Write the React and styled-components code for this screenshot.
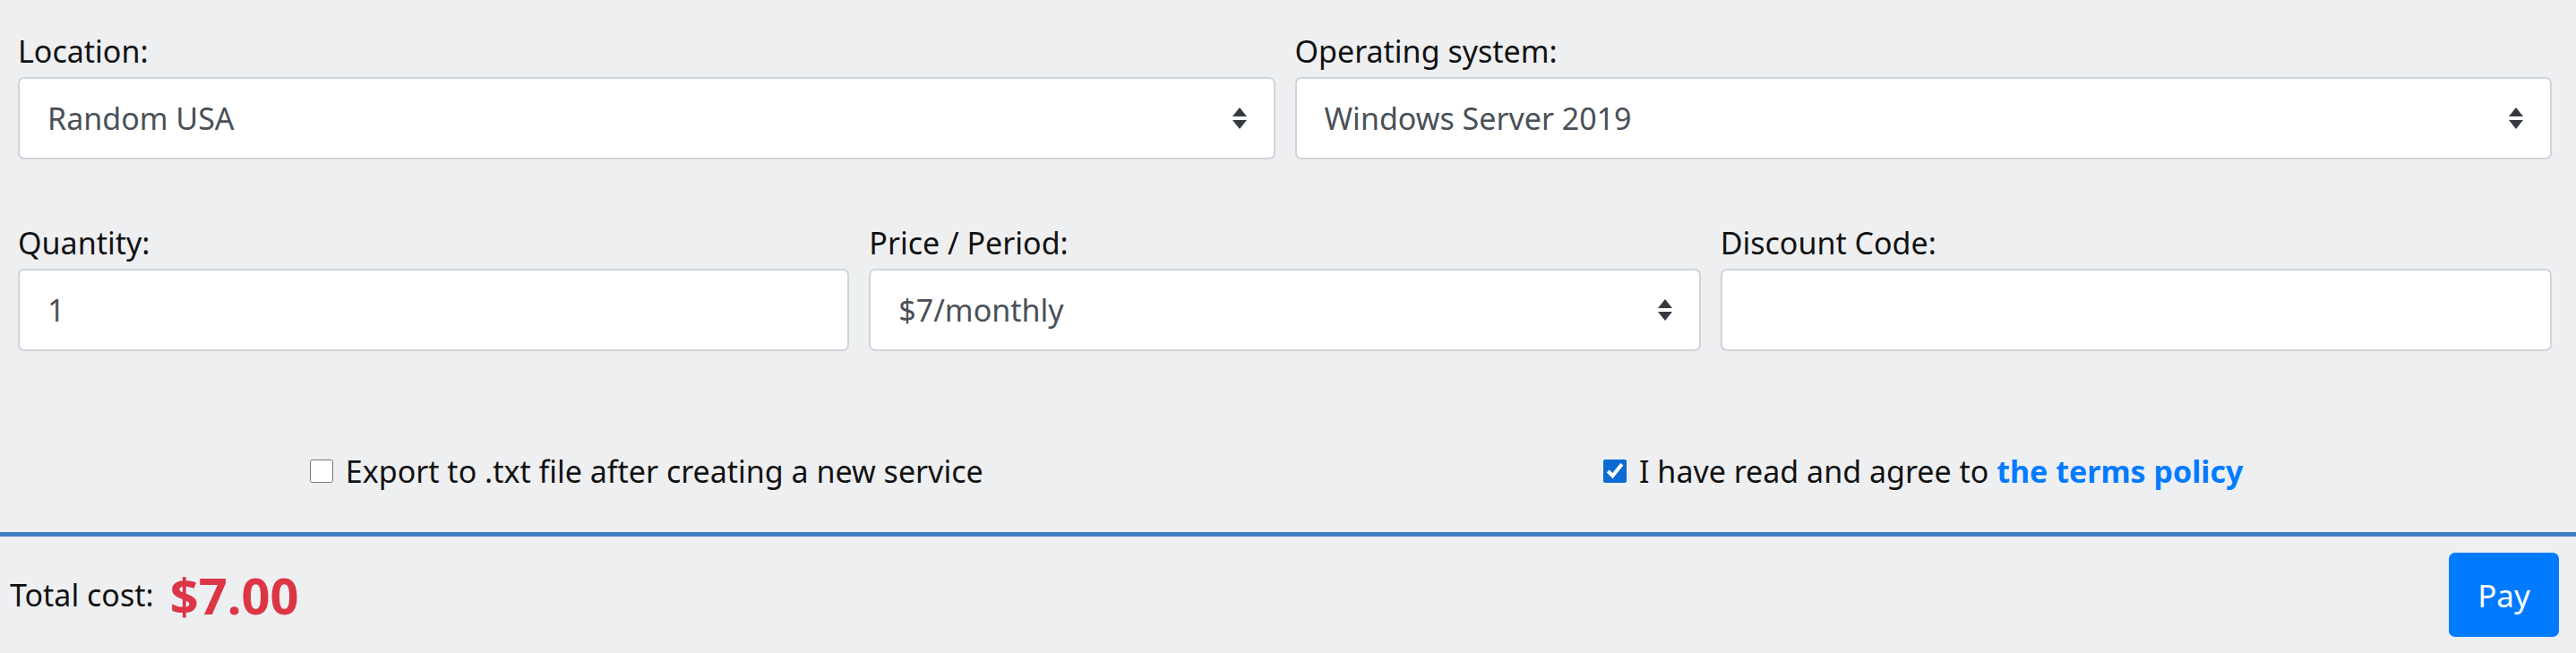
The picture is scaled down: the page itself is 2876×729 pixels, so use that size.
import React from "react";
import styled, { createGlobalStyle } from "styled-components";

const Global = createGlobalStyle`
  body {
    margin: 0;
    background: #eeeff1;
    font-family: "Noto Sans", "Open Sans", sans-serif;
    color: #111;
  }
`;

const Page = styled.div`
  padding: 35px 27px 0 20px;
`;

const Row = styled.div`
  display: grid;
  grid-template-columns: repeat(${(p) => p.cols}, 1fr);
  gap: 22px;
  margin-bottom: ${(p) => p.mb || 0}px;
`;

const Field = styled.div`
  display: flex;
  flex-direction: column;
`;

const Label = styled.label`
  font-size: 34px;
  line-height: 44px;
  margin-bottom: 7px;
`;

const Box = styled.div`
  height: 92px;
  box-sizing: border-box;
  background: #fff;
  border: 2px solid #ced4da;
  border-radius: 7px;
  display: flex;
  align-items: center;
  justify-content: space-between;
  padding: 0 30px 0 31px;
  font-size: 34px;
  color: #495057;
`;

const Arrows = () => (
  <svg width="16" height="24" viewBox="0 0 8 12">
    <path d="M4 0 L8 5 H0 Z M4 12 L0 7 H8 Z" fill="#343a40" />
  </svg>
);

const Select = ({ children }) => (
  <Box>
    <span>{children}</span>
    <Arrows />
  </Box>
);

const Checks = styled.div`
  display: grid;
  grid-template-columns: 1fr 1fr;
  gap: 22px;
  height: 114px;
  align-items: center;
  margin-top: 77px;
`;

const Check = styled.label`
  display: flex;
  align-items: center;
  justify-content: center;
  gap: 14px;
  font-size: 34px;
  input {
    width: 26px;
    height: 26px;
    margin: 0;
    accent-color: #0b6bd3;
  }
  a {
    color: #007bff;
    font-weight: bold;
    text-decoration: none;
  }
`;

const Footer = styled.div`
  border-top: 5px solid #3f80c4;
  margin-top: 11px;
  height: 130px;
  display: flex;
  align-items: center;
  justify-content: space-between;
  padding: 0 19px 0 11px;
`;

const Total = styled.div`
  display: flex;
  align-items: center;
  gap: 18px;
  font-size: 34px;
  strong {
    color: #dc3545;
    font-size: 56px;
    font-weight: bold;
  }
`;

const PayButton = styled.button`
  width: 123px;
  height: 94px;
  background: #007bff;
  border: none;
  border-radius: 7px;
  color: #fff;
  font-family: inherit;
  font-size: 35px;
`;

export default function App() {
  return (
    <>
      <Global />
      <Page>
        <Row cols={2} mb={71}>
          <Field>
            <Label>Location:</Label>
            <Select>Random USA</Select>
          </Field>
          <Field>
            <Label>Operating system:</Label>
            <Select>Windows Server 2019</Select>
          </Field>
        </Row>
        <Row cols={3}>
          <Field>
            <Label>Quantity:</Label>
            <Box>1</Box>
          </Field>
          <Field>
            <Label>Price / Period:</Label>
            <Select>$7/monthly</Select>
          </Field>
          <Field>
            <Label>Discount Code:</Label>
            <Box />
          </Field>
        </Row>
        <Checks>
          <Check>
            <input type="checkbox" />
            Export to .txt file after creating a new service
          </Check>
          <Check>
            <input type="checkbox" defaultChecked />
            <span>
              I have read and agree to <a href="#">the terms policy</a>
            </span>
          </Check>
        </Checks>
      </Page>
      <Footer>
        <Total>
          Total cost: <strong>$7.00</strong>
        </Total>
        <PayButton>Pay</PayButton>
      </Footer>
    </>
  );
}
